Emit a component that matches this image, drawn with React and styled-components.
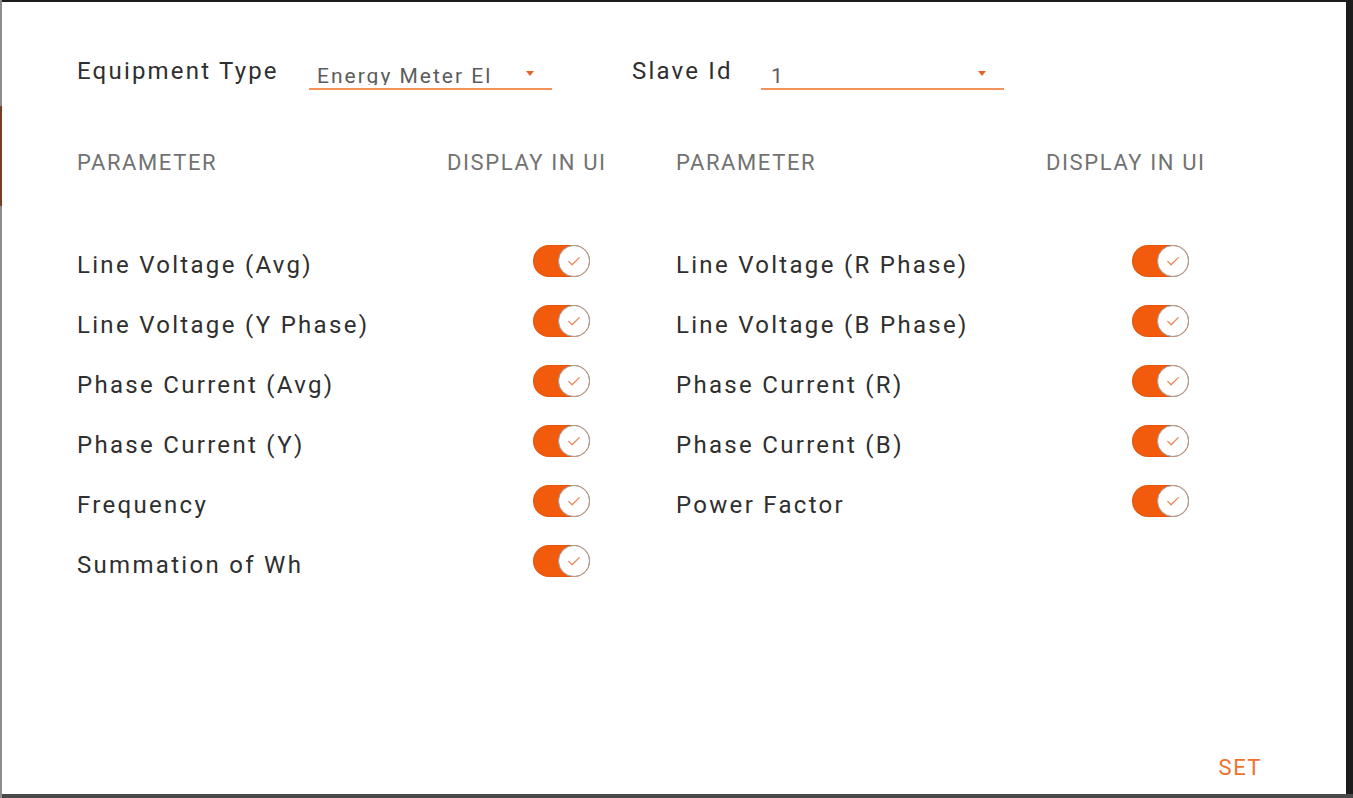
import React from "react";
import styled, { createGlobalStyle } from "styled-components";

const GlobalStyle = createGlobalStyle`
  html, body { margin: 0; padding: 0; background: #1e1e1e; }
  body { font-family: Roboto, "Liberation Sans", Arial, sans-serif; }
  *, *::before, *::after { box-sizing: border-box; }
`;

const Frame = styled.div`
  width: 1353px;
  height: 798px;
  display: flex;
  padding: 2px 7px 4px 2px;
  background:
    linear-gradient(#7a3f22, #7a3f22) 0 106px / 2px 100px no-repeat,
    linear-gradient(#8c8c8c, #8c8c8c) 0 0 / 2px 100% no-repeat,
    linear-gradient(#4a4a4a, #4a4a4a) 0 100% / 100% 4px no-repeat,
    #1c1c1c;
`;

const Dialog = styled.div`
  flex: 1;
  background: #ffffff;
  display: flex;
  flex-direction: column;
  padding-left: 75px;
`;

const TopRow = styled.div`
  display: flex;
  align-items: flex-start;
  margin-top: 55px;
`;

const FieldLabel = styled.div`
  width: ${(p) => p.$width}px;
  margin-left: ${(p) => p.$gap || 0}px;
  font-size: 24px;
  line-height: 28px;
  letter-spacing: 2.2px;
  color: #2f2f2f;
  white-space: nowrap;
`;

const Select = styled.div`
  width: ${(p) => p.$width}px;
  margin-top: 7px;
  display: flex;
  align-items: flex-start;
  padding: 0 18px 3px ${(p) => p.$pad}px;
  border-bottom: 2px solid #f3925a;
`;

const SelectValue = styled.div`
  flex: 1;
  height: 21px;
  overflow: hidden;
  font-size: 21px;
  line-height: 25px;
  letter-spacing: 2px;
  color: #5c5c5c;
  white-space: nowrap;
`;

const Caret = styled.span`
  margin-top: 7px;
  width: 0;
  height: 0;
  border-left: 4px solid transparent;
  border-right: 4px solid transparent;
  border-top: 5px solid #e4652a;
`;

const Columns = styled.div`
  display: grid;
  grid-template-columns: 599px 599px;
  margin-top: 61px;
`;

const Column = styled.div`
  display: flex;
  flex-direction: column;
`;

const HeaderRow = styled.div`
  display: flex;
  margin-bottom: 60px;
`;

const HeaderCell = styled.div`
  width: ${(p) => (p.$width ? `${p.$width}px` : "auto")};
  font-size: 22px;
  line-height: 24px;
  letter-spacing: 1.6px;
  color: #727272;
  text-transform: uppercase;
  white-space: nowrap;
`;

const Row = styled.div`
  display: grid;
  grid-template-columns: 456px 57px;
  height: 60px;
  align-items: start;
`;

const RowLabel = styled.div`
  font-size: 24px;
  line-height: 60px;
  letter-spacing: 2.3px;
  color: #2f2f2f;
  white-space: nowrap;
`;

const Track = styled.span`
  margin-top: 10px;
  width: 57px;
  height: 32px;
  border-radius: 16px;
  background: #f25a0c;
  display: flex;
  justify-content: flex-end;
  align-items: center;
  box-shadow: inset 0 0 0 1px rgba(200, 70, 10, 0.25);
`;

const Thumb = styled.span`
  width: 32px;
  height: 32px;
  border-radius: 50%;
  background: #ffffff;
  border: 1.5px solid #9e9e9e;
  display: flex;
  align-items: center;
  justify-content: center;
`;

const Footer = styled.div`
  margin-top: auto;
  display: flex;
  justify-content: flex-end;
  padding: 0 84px 14px 0;
`;

const SetButton = styled.button`
  border: none;
  background: transparent;
  padding: 0;
  font-family: inherit;
  font-size: 22px;
  line-height: 24px;
  letter-spacing: 1.5px;
  color: #f0702e;
  cursor: pointer;
`;

const Toggle = () => (
  <Track>
    <Thumb>
      <svg width="18" height="18" viewBox="0 0 24 24" fill="none">
        <path
          d="M5 12.5l4.5 4.5L19 7.5"
          stroke="#e98a5a"
          strokeWidth="1.8"
          strokeLinecap="round"
          strokeLinejoin="round"
        />
      </svg>
    </Thumb>
  </Track>
);

const left = [
  "Line Voltage (Avg)",
  "Line Voltage (Y Phase)",
  "Phase Current (Avg)",
  "Phase Current (Y)",
  "Frequency",
  "Summation of Wh",
];

const right = [
  "Line Voltage (R Phase)",
  "Line Voltage (B Phase)",
  "Phase Current (R)",
  "Phase Current (B)",
  "Power Factor",
];

const ParamColumn = ({ items }) => (
  <Column>
    <HeaderRow>
      <HeaderCell $width={370}>Parameter</HeaderCell>
      <HeaderCell>Display in UI</HeaderCell>
    </HeaderRow>
    {items.map((name) => (
      <Row key={name}>
        <RowLabel>{name}</RowLabel>
        <Toggle />
      </Row>
    ))}
  </Column>
);

export default function App() {
  return (
    <>
      <GlobalStyle />
      <Frame>
        <Dialog>
          <TopRow>
            <FieldLabel $width={232}>Equipment Type</FieldLabel>
            <Select $width={243} $pad={8}>
              <SelectValue>Energy Meter El</SelectValue>
              <Caret />
            </Select>
            <FieldLabel $width={129} $gap={80}>Slave Id</FieldLabel>
            <Select $width={243} $pad={10}>
              <SelectValue>1</SelectValue>
              <Caret />
            </Select>
          </TopRow>
          <Columns>
            <ParamColumn items={left} />
            <ParamColumn items={right} />
          </Columns>
          <Footer>
            <SetButton>SET</SetButton>
          </Footer>
        </Dialog>
      </Frame>
    </>
  );
}
